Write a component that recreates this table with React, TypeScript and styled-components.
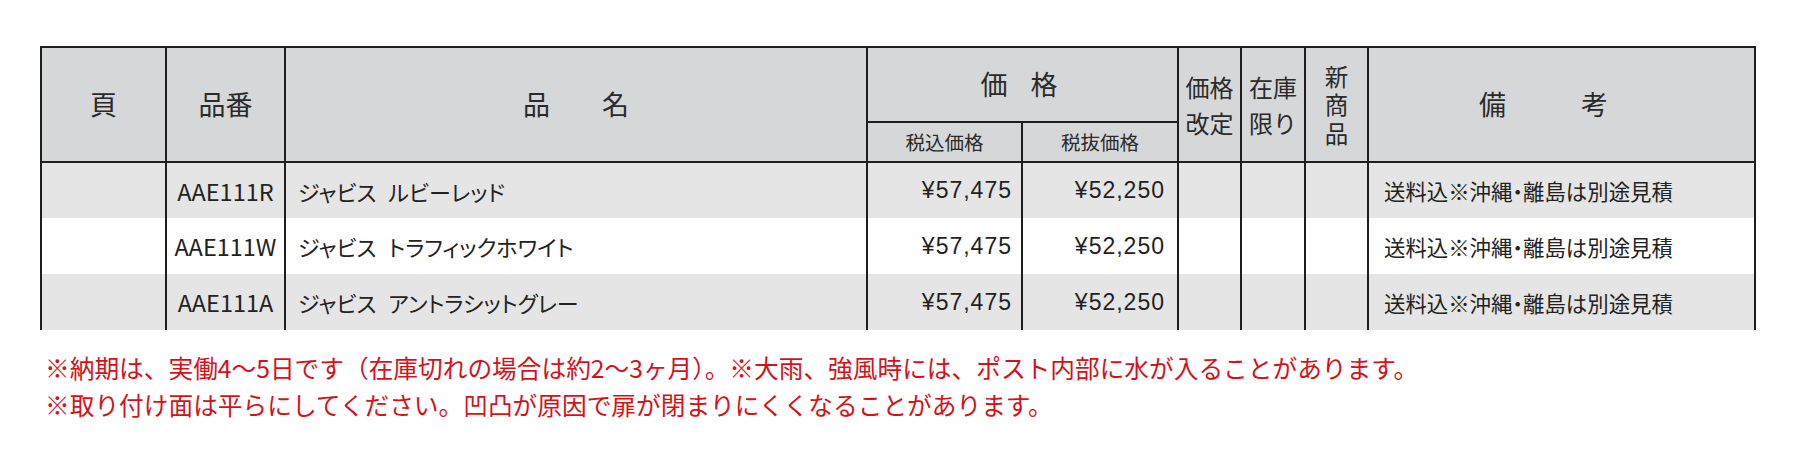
import React from "react";
import styled, { createGlobalStyle } from "styled-components";

const LINE = "#1e1e1e";

const GlobalStyle = createGlobalStyle`
	body {
		margin: 0;
		background: #ffffff;
		color: #222222;
		font-family: "Noto Sans CJK JP", "Noto Sans", sans-serif;
	}
`;

const Page = styled.div`
	padding: 46px 0 0 40px;
`;

const PriceTable = styled.table`
	border-collapse: collapse;
	table-layout: fixed;
	width: 1714px;
`;

const HeadRow = styled.tr<{ $height: number }>`
	height: ${(p) => p.$height}px;
`;

const HeadCell = styled.th<{ $size?: number; $line?: string }>`
	background: #d6d7d9;
	border: 2px solid ${LINE};
	padding: 0;
	font-weight: 400;
	font-size: ${(p) => p.$size ?? 27}px;
	line-height: ${(p) => p.$line ?? "1.2"};
	text-align: center;
	vertical-align: middle;
	color: #2a2a2a;
`;

const HeadLine = styled.span`
	display: block;
`;

const Spaced = styled.span<{ $gap: number; $shift?: number }>`
	display: inline-flex;
	gap: ${(p) => p.$gap}px;
	margin-right: ${(p) => p.$shift ?? 0}px;
`;

const BodyRow = styled.tr<{ $shade: boolean }>`
	height: 56px;
	background: ${(p) => (p.$shade ? "#e5e5e5" : "#ffffff")};
`;

const Cell = styled.td<{ $align?: "left" | "center" | "right"; $pad?: string }>`
	border-left: 2px solid ${LINE};
	border-right: 2px solid ${LINE};
	padding: ${(p) => p.$pad ?? "0"};
	text-align: ${(p) => p.$align ?? "left"};
	vertical-align: middle;
	font-size: 21.4px;
	white-space: nowrap;
	color: #222222;
`;

const Code = styled(Cell)`
	font-size: 23.5px;
`;

const Name = styled(Cell)`
	font-size: 22px;
	font-feature-settings: "palt";
`;

const Series = styled.span`
	margin-right: 12px;
`;

const Price = styled(Cell)`
	font-family: "Liberation Sans", Arial, sans-serif;
	font-size: 23px;
	letter-spacing: 1px;
`;

const Dot = styled.span`
	font-feature-settings: "halt";
`;

const Notes = styled.div`
	margin-top: 19px;
	padding-left: 5px;
	color: #d3121c;
	font-size: 24.7px;
	line-height: 37px;
	white-space: nowrap;
`;

const COLS = [125, 119, 582, 155, 156, 63, 64, 63, 387];

const ITEMS = [
	{ code: "AAE111R", color: "ルビーレッド" },
	{ code: "AAE111W", color: "トラフィックホワイト" },
	{ code: "AAE111A", color: "アントラシットグレー" },
];

const App: React.FC = () => {
	return (
		<>
			<GlobalStyle />
			<Page>
				<PriceTable>
					<colgroup>
						{COLS.map((w, i) => (
							<col key={i} style={{ width: w }} />
						))}
					</colgroup>
					<thead>
						<HeadRow $height={75}>
							<HeadCell rowSpan={2}>頁</HeadCell>
							<HeadCell rowSpan={2}>品番</HeadCell>
							<HeadCell rowSpan={2}>
								<Spaced $gap={52}>
									<span>品</span>
									<span>名</span>
								</Spaced>
							</HeadCell>
							<HeadCell colSpan={2}>
								<Spaced $gap={23} $shift={7}>
									<span>価</span>
									<span>格</span>
								</Spaced>
							</HeadCell>
							<HeadCell rowSpan={2} $size={24} $line="36px">
								<HeadLine>価格</HeadLine>
								<HeadLine>改定</HeadLine>
							</HeadCell>
							<HeadCell rowSpan={2} $size={24} $line="36px">
								<HeadLine>在庫</HeadLine>
								<HeadLine>限り</HeadLine>
							</HeadCell>
							<HeadCell rowSpan={2} $size={23.5} $line="28.5px">
								<HeadLine>新</HeadLine>
								<HeadLine>商</HeadLine>
								<HeadLine>品</HeadLine>
							</HeadCell>
							<HeadCell rowSpan={2}>
								<Spaced $gap={75} $shift={36}>
									<span>備</span>
									<span>考</span>
								</Spaced>
							</HeadCell>
						</HeadRow>
						<HeadRow $height={40}>
							<HeadCell $size={19.5}>税込価格</HeadCell>
							<HeadCell $size={19.5}>税抜価格</HeadCell>
						</HeadRow>
					</thead>
					<tbody>
						{ITEMS.map((item, i) => (
							<BodyRow key={item.code} $shade={i % 2 === 0}>
								<Cell />
								<Code $align="center">{item.code}</Code>
								<Name $pad="0 0 0 12px">
									<Series>ジャビス</Series>
									{item.color}
								</Name>
								<Price $align="right" $pad="0 9px 0 0">
									¥57,475
								</Price>
								<Price $align="right" $pad="0 12px 0 0">
									¥52,250
								</Price>
								<Cell />
								<Cell />
								<Cell />
								<Cell $pad="0 0 0 15px">
									送料込※沖縄<Dot>・</Dot>離島は別途見積
								</Cell>
							</BodyRow>
						))}
					</tbody>
				</PriceTable>
				<Notes>
					<div>
						※納期は、実働4～5日です（在庫切れの場合は約2～3ヶ月）。※大雨、強風時には、ポスト内部に水が入ることがあります。
					</div>
					<div>※取り付け面は平らにしてください。凹凸が原因で扉が閉まりにくくなることがあります。</div>
				</Notes>
			</Page>
		</>
	);
};

export default App;
